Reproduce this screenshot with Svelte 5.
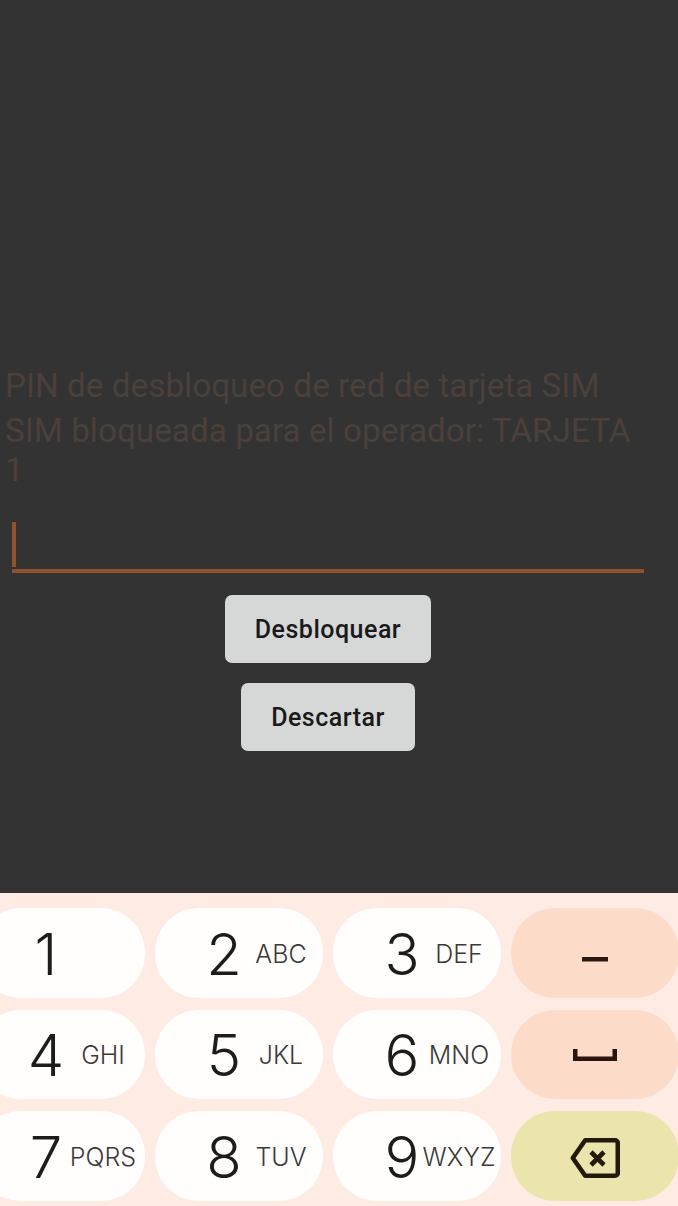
<script>
  const keys = [
    { digit: '1', letters: '' },
    { digit: '2', letters: 'ABC' },
    { digit: '3', letters: 'DEF' },
    { icon: 'dash' },
    { digit: '4', letters: 'GHI' },
    { digit: '5', letters: 'JKL' },
    { digit: '6', letters: 'MNO' },
    { icon: 'space' },
    { digit: '7', letters: 'PQRS' },
    { digit: '8', letters: 'TUV' },
    { digit: '9', letters: 'WXYZ' },
    { icon: 'backspace' }
  ];
</script>

<div class="screen">
  <main class="unlock">
    <h1 class="title">PIN de desbloqueo de red de tarjeta SIM</h1>
    <p class="message">SIM bloqueada para el operador: TARJETA 1</p>

    <div class="form">
      <div class="field">
        <div class="caret"></div>
      </div>

      <div class="actions">
        <button class="btn">Desbloquear</button>
        <button class="btn">Descartar</button>
      </div>
    </div>
  </main>

  <div class="keypad">
    {#each keys as key}
      {#if key.icon}
        <button class="key" class:fn={key.icon !== 'backspace'} class:del={key.icon === 'backspace'} aria-label={key.icon}>
          {#if key.icon === 'dash'}
            <svg width="26" height="5" viewBox="0 0 26 5" class="dash"><rect width="26" height="4.5" fill="#2a1a14" /></svg>
          {:else if key.icon === 'space'}
            <svg width="44" height="12" viewBox="0 0 44 12" class="space"><path d="M0 0h4.5v7.5h35V0H44v12H0z" fill="#2a1410" /></svg>
          {:else}
            <svg width="50" height="40" viewBox="0 0 50 40" class="backspace" fill="none" stroke="#241a0c" stroke-width="4.6" stroke-linejoin="round">
              <path d="M2.8 20 15.2 2.3H45a2.8 2.8 0 0 1 2.8 2.8v29.8a2.8 2.8 0 0 1-2.8 2.8H15.2z" />
              <path d="M21 14l13 13M34 14l-13 13" stroke-width="4.6" />
            </svg>
          {/if}
        </button>
      {:else}
        <button class="key">
          <span class="digit">{key.digit}</span>
          <span class="letters">{key.letters}</span>
        </button>
      {/if}
    {/each}
  </div>
</div>

<style>
  :global(body) {
    margin: 0;
    background: #333333;
  }

  .screen {
    width: 678px;
    height: 1206px;
    display: flex;
    flex-direction: column;
    overflow: hidden;
    font-family: Roboto, sans-serif;
  }

  .unlock {
    height: 893px;
    box-sizing: border-box;
    padding-top: 367px;
    background: #333333;
  }

  .title,
  .message {
    margin: 0;
    padding: 0 30px 0 5px;
    font-size: 33.3px;
    font-weight: 400;
    color: #4b403a;
  }

  .title {
    line-height: 38px;
    margin-bottom: 6px;
  }

  .message {
    line-height: 39px;
  }

  .form {
    margin: 0 34px 0 12px;
  }

  .field {
    margin-top: 33px;
    padding-bottom: 2px;
    border-bottom: 4px solid #8f5230;
  }

  .caret {
    width: 4px;
    height: 45px;
    background: #8f5230;
  }

  .actions {
    display: flex;
    flex-direction: column;
    align-items: center;
    gap: 20px;
    margin-top: 22px;
  }

  .btn {
    height: 68px;
    padding: 0 30px;
    border: none;
    border-radius: 7px;
    background: #d6d8d8;
    color: #1a1a1a;
    font-family: Roboto, sans-serif;
    font-size: 25px;
    font-weight: 500;
    letter-spacing: 0.5px;
  }

  .keypad {
    flex: 1;
    display: grid;
    grid-template-columns: repeat(4, 168px);
    grid-auto-rows: 89.5px;
    gap: 12px 10px;
    padding-top: 15px;
    margin-left: -23px;
    width: 701px;
    background: #fdebe4;
  }

  .key {
    display: grid;
    grid-template-columns: 60px 54px;
    align-items: center;
    justify-items: center;
    padding: 2px 0 0 39px;
    border: none;
    border-radius: 44px;
    background: #fffefd;
    color: #1e1c1a;
  }

  .key.fn {
    background: #fcdcc9;
  }

  .key.del {
    background: #ebe5ad;
  }

  .key.fn,
  .key.del {
    display: flex;
    justify-content: center;
    padding: 0;
  }

  .digit {
    font-family: Inter, sans-serif;
    font-size: 58px;
    font-weight: 300;
    line-height: 1;
  }

  .letters {
    font-family: Inter, sans-serif;
    font-size: 25px;
    font-weight: 300;
    color: #3c3a38;
    white-space: nowrap;
  }

  .dash {
    margin-top: 14px;
  }

  .space {
    margin-top: 2px;
  }

  .backspace {
    margin-top: 4px;
  }
</style>
